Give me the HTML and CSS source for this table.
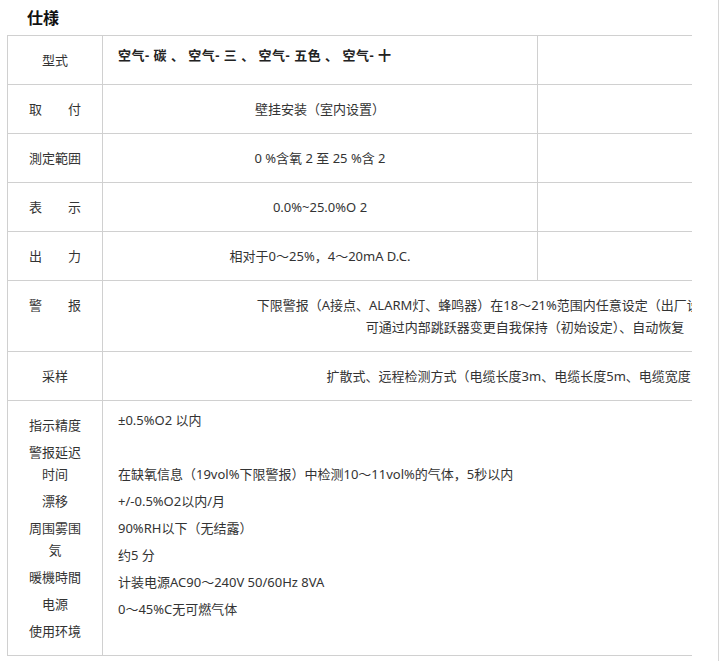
FILE: index.html
```html
<!DOCTYPE html>
<html lang="zh">
<head>
<meta charset="utf-8">
<title>仕様</title>
<link rel="stylesheet" href="styles.css">
</head>
<body>
<div class="page">
  <h3 class="title">仕様</h3>
  <div class="scroll">
    <table class="spec">
      <colgroup>
        <col class="c1">
        <col class="c2">
        <col class="c3">
      </colgroup>
      <tr>
        <td class="lbl">型式</td>
        <td class="val top"><strong>空气- 碳 、 空气- 三 、 空气- 五色 、 空气- 十</strong></td>
        <td></td>
      </tr>
      <tr>
        <td class="lbl">取　　付</td>
        <td class="val center">壁挂安装（室内设置）</td>
        <td></td>
      </tr>
      <tr>
        <td class="lbl">測定範囲</td>
        <td class="val center">0 %含氧 2 至 25 %含 2</td>
        <td></td>
      </tr>
      <tr>
        <td class="lbl">表　　示</td>
        <td class="val center">0.0%~25.0%O 2</td>
        <td></td>
      </tr>
      <tr>
        <td class="lbl">出　　力</td>
        <td class="val center">相对于0～25%，4～20mA D.C.</td>
        <td></td>
      </tr>
      <tr>
        <td class="lbl">警　　报</td>
        <td class="val center" colspan="2">下限警报（A接点、ALARM灯、蜂鸣器）在18～21%范围内任意设定（出厂设定：19.0vol%）<br>可通过内部跳跃器变更自我保持（初始设定）、自动恢复</td>
      </tr>
      <tr>
        <td class="lbl">采样</td>
        <td class="val center" colspan="2">扩散式、远程检测方式（电缆长度3m、电缆长度5m、电缆宽度1m）</td>
      </tr>
      <tr>
        <td class="lbl list">
          <p>指示精度</p>
          <p>警报延迟时间</p>
          <p>漂移</p>
          <p>周围雾围気</p>
          <p>暖機時間</p>
          <p>电源</p>
          <p>使用环境</p>
        </td>
        <td class="val top list" colspan="2">
          <p>±0.5%O2 以内</p>
          <p>&nbsp;</p>
          <p>在缺氧信息（19vol%下限警报）中检测10～11vol%的气体，5秒以内</p>
          <p>+/-0.5%O2以内/月</p>
          <p>90%RH以下（无结露）</p>
          <p>约5 分</p>
          <p>计装电源AC90～240V 50/60Hz 8VA</p>
          <p>0～45%C无可燃气体</p>
        </td>
      </tr>
    </table>
  </div>
</div>
</body>
</html>
```

FILE: styles.css
```css
html, body {
  margin: 0;
  padding: 0;
  background: #fff;
}

body {
  font-family: "Noto Sans", "Noto Sans CJK SC", sans-serif;
  font-size: 13px;
  color: #333;
}

.page {
  width: 719px;
  min-height: 661px;
  border-right: 1px solid #d6d6d6;
  padding-top: 7px;
  box-sizing: border-box;
}

.title {
  margin: 0 0 6px 27px;
  font-size: 16px;
  line-height: 22px;
  font-weight: bold;
  color: #111;
}

.scroll {
  margin-left: 7px;
  width: 685px;
  overflow: hidden;
}

.spec {
  border-collapse: collapse;
  table-layout: fixed;
  width: 940px;
}

.c1 { width: 95px; }
.c2 { width: 435px; }
.c3 { width: 410px; }

.spec td {
  border: 1px solid #d0d0d0;
  vertical-align: top;
  line-height: 22px;
  padding: 13px 15px;
  white-space: normal;
}

.spec td.lbl {
  text-align: center;
  padding: 13px 18px;
}

.spec td.center {
  text-align: center;
  white-space: nowrap;
}

.spec td.top {
  padding-top: 8px;
  text-align: left;
}

.spec strong {
  font-weight: bold;
  color: #222;
  letter-spacing: 0.5px;
}

.list p {
  margin: 0 0 5px;
}

.list p:last-child {
  margin-bottom: 0;
}
```
